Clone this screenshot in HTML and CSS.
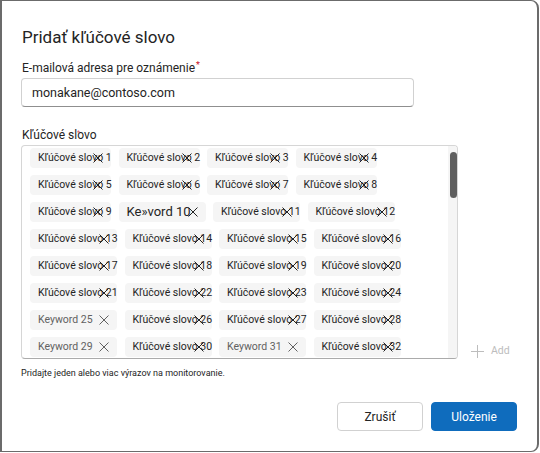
FILE: index.html
```html
<!DOCTYPE html>
<html lang="sk">
<head>
<meta charset="utf-8">
<title>Pridať kľúčové slovo</title>
<link rel="stylesheet" href="styles.css">
</head>
<body>
<div class="dialog" role="dialog" aria-labelledby="dlg-title">
  <h1 class="dialog-title" id="dlg-title">Pridať kľúčové slovo</h1>

  <label class="field-label" for="email">E-mailová adresa pre oznámenie<span class="required">*</span></label>
  <div class="input-wrap">
    <input class="text-input" id="email" type="email" value="monakane@contoso.com">
  </div>

  <div class="field-label field-label-keywords">Kľúčové slovo<span class="required required-mark">*</span></div>
  <div class="keyword-row">
    <div class="keyword-box">
      <div class="keyword-list">
        <span class="tag tag-short"><span class="tag-text">Kľúčové slovo 1</span><span class="tag-dismiss"><svg viewBox="0 0 10 10"><path d="M.5.5l9 9M9.5.5l-9 9"/></svg></span></span>
        <span class="tag tag-short"><span class="tag-text">Kľúčové slovo 2</span><span class="tag-dismiss"><svg viewBox="0 0 10 10"><path d="M.5.5l9 9M9.5.5l-9 9"/></svg></span></span>
        <span class="tag tag-short"><span class="tag-text">Kľúčové slovo 3</span><span class="tag-dismiss"><svg viewBox="0 0 10 10"><path d="M.5.5l9 9M9.5.5l-9 9"/></svg></span></span>
        <span class="tag tag-short"><span class="tag-text">Kľúčové slovo 4</span><span class="tag-dismiss"><svg viewBox="0 0 10 10"><path d="M.5.5l9 9M9.5.5l-9 9"/></svg></span></span>
        <span class="tag tag-short"><span class="tag-text">Kľúčové slovo 5</span><span class="tag-dismiss"><svg viewBox="0 0 10 10"><path d="M.5.5l9 9M9.5.5l-9 9"/></svg></span></span>
        <span class="tag tag-short"><span class="tag-text">Kľúčové slovo 6</span><span class="tag-dismiss"><svg viewBox="0 0 10 10"><path d="M.5.5l9 9M9.5.5l-9 9"/></svg></span></span>
        <span class="tag tag-short"><span class="tag-text">Kľúčové slovo 7</span><span class="tag-dismiss"><svg viewBox="0 0 10 10"><path d="M.5.5l9 9M9.5.5l-9 9"/></svg></span></span>
        <span class="tag tag-short"><span class="tag-text">Kľúčové slovo 8</span><span class="tag-dismiss"><svg viewBox="0 0 10 10"><path d="M.5.5l9 9M9.5.5l-9 9"/></svg></span></span>
        <span class="tag tag-short"><span class="tag-text">Kľúčové slovo 9</span><span class="tag-dismiss"><svg viewBox="0 0 10 10"><path d="M.5.5l9 9M9.5.5l-9 9"/></svg></span></span>
        <span class="tag tag-long"><span class="tag-text tag-text-large">Ke»vord 10</span><span class="tag-dismiss"><svg viewBox="0 0 10 10"><path d="M.5.5l9 9M9.5.5l-9 9"/></svg></span></span>
        <span class="tag tag-long"><span class="tag-text">Kľúčové slovo 11</span><span class="tag-dismiss"><svg viewBox="0 0 10 10"><path d="M.5.5l9 9M9.5.5l-9 9"/></svg></span></span>
        <span class="tag tag-long"><span class="tag-text">Kľúčové slovo 12</span><span class="tag-dismiss"><svg viewBox="0 0 10 10"><path d="M.5.5l9 9M9.5.5l-9 9"/></svg></span></span>
        <span class="tag tag-long"><span class="tag-text">Kľúčové slovo 13</span><span class="tag-dismiss"><svg viewBox="0 0 10 10"><path d="M.5.5l9 9M9.5.5l-9 9"/></svg></span></span>
        <span class="tag tag-long"><span class="tag-text">Kľúčové slovo 14</span><span class="tag-dismiss"><svg viewBox="0 0 10 10"><path d="M.5.5l9 9M9.5.5l-9 9"/></svg></span></span>
        <span class="tag tag-long"><span class="tag-text">Kľúčové slovo 15</span><span class="tag-dismiss"><svg viewBox="0 0 10 10"><path d="M.5.5l9 9M9.5.5l-9 9"/></svg></span></span>
        <span class="tag tag-long"><span class="tag-text">Kľúčové slovo 16</span><span class="tag-dismiss"><svg viewBox="0 0 10 10"><path d="M.5.5l9 9M9.5.5l-9 9"/></svg></span></span>
        <span class="tag tag-long"><span class="tag-text">Kľúčové slovo 17</span><span class="tag-dismiss"><svg viewBox="0 0 10 10"><path d="M.5.5l9 9M9.5.5l-9 9"/></svg></span></span>
        <span class="tag tag-long"><span class="tag-text">Kľúčové slovo 18</span><span class="tag-dismiss"><svg viewBox="0 0 10 10"><path d="M.5.5l9 9M9.5.5l-9 9"/></svg></span></span>
        <span class="tag tag-long"><span class="tag-text">Kľúčové slovo 19</span><span class="tag-dismiss"><svg viewBox="0 0 10 10"><path d="M.5.5l9 9M9.5.5l-9 9"/></svg></span></span>
        <span class="tag tag-long"><span class="tag-text">Kľúčové slovo 20</span><span class="tag-dismiss"><svg viewBox="0 0 10 10"><path d="M.5.5l9 9M9.5.5l-9 9"/></svg></span></span>
        <span class="tag tag-long"><span class="tag-text">Kľúčové slovo 21</span><span class="tag-dismiss"><svg viewBox="0 0 10 10"><path d="M.5.5l9 9M9.5.5l-9 9"/></svg></span></span>
        <span class="tag tag-long"><span class="tag-text">Kľúčové slovo 22</span><span class="tag-dismiss"><svg viewBox="0 0 10 10"><path d="M.5.5l9 9M9.5.5l-9 9"/></svg></span></span>
        <span class="tag tag-long"><span class="tag-text">Kľúčové slovo 23</span><span class="tag-dismiss"><svg viewBox="0 0 10 10"><path d="M.5.5l9 9M9.5.5l-9 9"/></svg></span></span>
        <span class="tag tag-long"><span class="tag-text">Kľúčové slovo 24</span><span class="tag-dismiss"><svg viewBox="0 0 10 10"><path d="M.5.5l9 9M9.5.5l-9 9"/></svg></span></span>
        <span class="tag tag-long tag-muted"><span class="tag-text">Keyword 25</span><span class="tag-dismiss"><svg viewBox="0 0 10 10"><path d="M.5.5l9 9M9.5.5l-9 9"/></svg></span></span>
        <span class="tag tag-long"><span class="tag-text">Kľúčové slovo 26</span><span class="tag-dismiss"><svg viewBox="0 0 10 10"><path d="M.5.5l9 9M9.5.5l-9 9"/></svg></span></span>
        <span class="tag tag-long"><span class="tag-text">Kľúčové slovo 27</span><span class="tag-dismiss"><svg viewBox="0 0 10 10"><path d="M.5.5l9 9M9.5.5l-9 9"/></svg></span></span>
        <span class="tag tag-long"><span class="tag-text">Kľúčové slovo 28</span><span class="tag-dismiss"><svg viewBox="0 0 10 10"><path d="M.5.5l9 9M9.5.5l-9 9"/></svg></span></span>
        <span class="tag tag-long tag-muted"><span class="tag-text">Keyword 29</span><span class="tag-dismiss"><svg viewBox="0 0 10 10"><path d="M.5.5l9 9M9.5.5l-9 9"/></svg></span></span>
        <span class="tag tag-long"><span class="tag-text">Kľúčové slovo 30</span><span class="tag-dismiss"><svg viewBox="0 0 10 10"><path d="M.5.5l9 9M9.5.5l-9 9"/></svg></span></span>
        <span class="tag tag-long tag-muted"><span class="tag-text">Keyword 31</span><span class="tag-dismiss"><svg viewBox="0 0 10 10"><path d="M.5.5l9 9M9.5.5l-9 9"/></svg></span></span>
        <span class="tag tag-long"><span class="tag-text">Kľúčové slovo 32</span><span class="tag-dismiss"><svg viewBox="0 0 10 10"><path d="M.5.5l9 9M9.5.5l-9 9"/></svg></span></span>
      </div>
      <div class="scroll-track" aria-hidden="true"><div class="scroll-thumb"></div></div>
    </div>
    <button class="add-button" type="button" disabled>
      <svg class="add-icon" viewBox="0 0 13 13"><path d="M6.5 0v13M0 6.5h13"/></svg>
      <span>Add</span>
    </button>
  </div>
  <p class="helper-text">Pridajte jeden alebo viac výrazov na monitorovanie.</p>

  <div class="dialog-actions">
    <button class="btn btn-secondary" type="button">Zrušiť</button>
    <button class="btn btn-primary" type="button">Uloženie</button>
  </div>
</div>
</body>
</html>
```

FILE: styles.css
```css
html, body {
  margin: 0;
  padding: 0;
  background: #ffffff;
}

body {
  font-family: Roboto, "Liberation Sans", sans-serif;
  color: #242424;
}

.dialog {
  box-sizing: border-box;
  width: 539px;
  height: 452px;
  border: 1px solid #6b6b6b;
  border-left-width: 2px;
  border-right-width: 2px;
  border-radius: 0 8px 8px 0;
  padding: 25px 20px 0 19px;
  display: flex;
  flex-direction: column;
}

.dialog-title {
  margin: 0 0 12px 1px;
  font-size: 17px;
  line-height: 22px;
  font-weight: 400;
  color: #242424;
}

.field-label {
  display: block;
  position: relative;
  margin-left: 1px;
  font-size: 12px;
  line-height: 16px;
  color: #242424;
}

.required {
  color: #c50f1f;
  font-size: 9px;
  vertical-align: top;
  line-height: 10px;
  margin-left: 1px;
}

.field-label-keywords {
  margin-top: 20px;
}

/* stray required marker that sits inside the keyword label */
.required-mark {
  position: absolute;
  left: 54px;
  top: 1px;
  font-size: 7px;
  opacity: 0.7;
}

.input-wrap {
  margin-top: 2px;
  width: 393px;
}

.text-input {
  box-sizing: border-box;
  width: 100%;
  height: 29px;
  padding: 0 10px;
  border: 1px solid #d1d1d1;
  border-bottom-color: #8f8f8f;
  border-radius: 4px;
  font-family: inherit;
  font-size: 12.5px;
  color: #242424;
  background: #fff;
  outline: none;
}

.keyword-row {
  margin-top: 2px;
  display: flex;
  align-items: flex-end;
}

.keyword-box {
  box-sizing: border-box;
  width: 437px;
  height: 214px;
  border: 1px solid #d6d6d6;
  border-bottom-color: #ababab;
  border-radius: 4px;
  overflow: hidden;
  display: flex;
}

.keyword-list {
  flex: 1;
  overflow: hidden;
  padding: 2px 0 8px 8px;
  display: flex;
  flex-wrap: wrap;
  align-content: flex-start;
  gap: 7px 7.5px;
}

.scroll-track {
  flex: none;
  width: 9px;
  background: #f5f5f5;
  padding-top: 6px;
  box-sizing: border-box;
}

.scroll-thumb {
  width: 7px;
  height: 46px;
  margin-left: 1.5px;
  background: #5f5f5f;
  border-radius: 4px;
}

.tag {
  box-sizing: border-box;
  display: inline-flex;
  align-items: center;
  gap: 5px;
  height: 20px;
  padding: 0 8px;
  background: #f5f5f5;
  border-radius: 4px;
  font-size: 10.5px;
  color: #242424;
}

.tag-text {
  display: block;
  white-space: nowrap;
  overflow: visible;
  line-height: 20px;
}

.tag-short .tag-text { width: 50px; }
.tag-long .tag-text { width: 56px; }

.tag-text-large {
  font-size: 13px;
}

.tag-dismiss {
  display: block;
  width: 10px;
  height: 10px;
  position: relative;
  color: #242424;
}

.tag-dismiss svg {
  display: block;
  width: 10px;
  height: 10px;
  fill: none;
  stroke: currentColor;
  stroke-width: 1;
}

.tag-muted,
.tag-muted .tag-dismiss {
  color: #616161;
}

.add-button {
  display: flex;
  align-items: center;
  gap: 7px;
  margin-left: 13px;
  margin-bottom: 1px;
  padding: 0;
  border: 0;
  background: none;
  font-family: inherit;
  font-size: 10.5px;
  color: #bdbdbd;
  line-height: 14px;
}

.add-icon {
  width: 13px;
  height: 13px;
  fill: none;
  stroke: #bdbdbd;
  stroke-width: 1;
}

.helper-text {
  margin: 8px 0 0;
  font-size: 9px;
  line-height: 12px;
  color: #242424;
}

.dialog-actions {
  margin-top: 23px;
  display: flex;
  justify-content: flex-end;
  gap: 8px;
}

.btn {
  box-sizing: border-box;
  width: 86px;
  height: 29px;
  border-radius: 4px;
  font-family: inherit;
  font-size: 12px;
  font-weight: 400;
  padding: 0;
}

.btn-secondary {
  background: #ffffff;
  border: 1px solid #d1d1d1;
  color: #242424;
}

.btn-primary {
  background: #0f6cbd;
  border: 1px solid #0f6cbd;
  color: #ffffff;
}
```
